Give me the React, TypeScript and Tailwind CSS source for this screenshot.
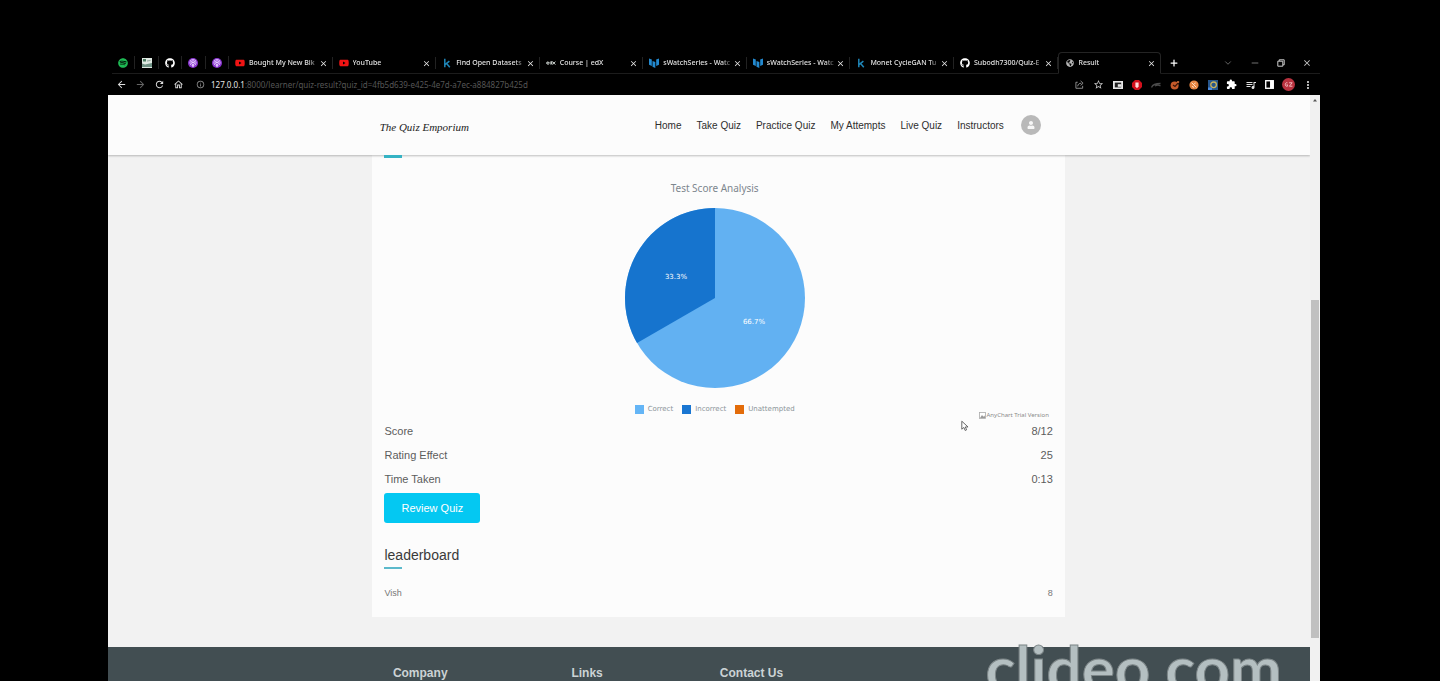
import React from "react";
import { FaGithub, FaPodcast, FaSpotify, FaYoutube, FaUser, FaGlobeAmericas } from "react-icons/fa";
import {
  MdArrowBack,
  MdArrowForward,
  MdClose,
  MdExtension,
  MdInfoOutline,
  MdMoreVert,
  MdOutlineHome,
  MdOutlineStarBorder,
  MdQueueMusic,
  MdRefresh,
} from "react-icons/md";
import { Minus, Plus, ChevronDown } from "lucide-react";

function KaggleIcon() {
  return (
    <svg viewBox="0 0 10 10" className="size-[10px]" fill="none" stroke="#1f86b8" strokeWidth="1.5">
      <path d="M2.8 0.8V9.2M7.4 3.2L3 6.6M4.6 5.4L7.8 9.2" />
    </svg>
  );
}

function WatchIcon() {
  return (
    <svg viewBox="0 0 10 10" className="size-[10px]" fill="#2389cf">
      <path d="M0 0.5L2.8 1.5V8L0 6.8Z" />
      <path d="M3.5 3L6.3 4V10L3.5 8.8Z" />
      <path d="M7.2 1.5L10 0.5V6.8L7.2 8Z" />
    </svg>
  );
}

function EdxIcon() {
  return (
    <svg viewBox="0 0 10 10" className="size-[10px]" fill="none" stroke="#c9cfcb" strokeWidth="1">
      <path d="M0.6 5H3C3 3.6 0.6 3.6 0.6 5S2.4 6.4 3 6M5.8 3V6.4M5.8 5C5.8 3.6 3.8 3.6 3.8 5S5.8 6.4 5.8 5M6.6 3.6L9.4 6.6M9.4 3.6L6.6 6.6" />
    </svg>
  );
}

function PhotoIcon() {
  return (
    <svg viewBox="0 0 10 10" className="size-[10px]">
      <rect width="10" height="10" fill="#dfe9e2" />
      <path d="M0 9V5.5L3 6.5L10 5V9Z" fill="#6f9184" />
      <path d="M1 1H4V3.5H1Z" fill="#4c7c63" />
      <path d="M5 3L8.5 2.5" stroke="#8fa49a" />
    </svg>
  );
}

const pinned = [
  { name: "Spotify", icon: <FaSpotify className="size-[10px] text-[#1eb954]" /> },
  { name: "Photos", icon: <PhotoIcon /> },
  { name: "GitHub", icon: <FaGithub className="size-[10px] text-white" /> },
  { name: "Podcast", icon: <FaPodcast className="size-[10px] rounded-full bg-[#8a35d0] p-px text-[#e9d3ff]" /> },
  { name: "Podcast two", icon: <FaPodcast className="size-[10px] rounded-full bg-[#8a35d0] p-px text-[#e9d3ff]" /> },
];

const youtube = <FaYoutube className="size-[10px] text-[#f01414]" />;

const tabs = [
  { title: "Bought My New Bik", icon: youtube },
  { title: "YouTube", icon: youtube },
  { title: "Find Open Datasets", icon: <KaggleIcon /> },
  { title: "Course | edX", icon: <EdxIcon /> },
  { title: "sWatchSeries - Watc", icon: <WatchIcon /> },
  { title: "sWatchSeries - Watc", icon: <WatchIcon /> },
  { title: "Monet CycleGAN Tu", icon: <KaggleIcon /> },
  { title: "Subodh7300/Quiz-E", icon: <FaGithub className="size-[10px] text-white" /> },
  { title: "Result", icon: <FaGlobeAmericas className="size-2 text-[#b5b5b5]" /> },
];

function TabStrip() {
  return (
    <div className="flex h-[22px] items-stretch pl-1">
      <div className="grid w-[117px] grid-cols-5 border-b border-[#1c1c1c]">
        {pinned.map((p) => (
          <button key={p.name} aria-label={p.name} className="my-1 flex items-center justify-center border-r border-[#222]">
            {p.icon}
          </button>
        ))}
      </div>
      <div className="grid min-w-0 flex-1 grid-cols-9">
        {tabs.map((t, i) => {
          const active = i === tabs.length - 1;
          return (
            <div
              key={i}
              className={
                active
                  ? "flex min-w-0 items-center rounded-t border border-[#242424] border-b-transparent pl-[6px]"
                  : "flex min-w-0 items-center border-y border-[#1c1c1c] border-t-transparent pl-[6px]"
              }
            >
              <span className="flex w-[10px] shrink-0 justify-center">{t.icon}</span>
              <span className="ml-1 min-w-0 flex-1 overflow-hidden mask-r-from-85% mask-r-to-100% text-[7px] leading-3 font-medium whitespace-nowrap text-[#e2e2e2]">
                {t.title}
              </span>
              <button aria-label={"Close " + t.title} className="mr-1 shrink-0 text-[#e6e6e6]">
                <MdClose className="size-[9px]" />
              </button>
              {!active && <span className="h-3 w-px bg-[#222]" />}
            </div>
          );
        })}
      </div>
      <div className="flex w-[159px] items-center border-b border-[#1c1c1c] pr-2 pl-2">
        <button aria-label="New tab" className="text-white">
          <Plus className="size-[10px]" strokeWidth={3} />
        </button>
        <div className="ml-auto flex items-center gap-[17px]">
          <button aria-label="Search tabs" className="text-[#777]"><ChevronDown className="size-[10px]" /></button>
          <button aria-label="Minimize" className="text-[#888]"><Minus className="size-[10px]" /></button>
          <button aria-label="Restore" className="text-[#ccc]">
            <svg viewBox="0 0 8 8" className="size-2" fill="none" stroke="currentColor" strokeWidth="1">
              <path d="M0.8 2.2H5.8V7.2H0.8ZM2.2 2V0.8H7.2V5.8H6" />
            </svg>
          </button>
          <button aria-label="Close window" className="text-[#ccc]"><MdClose className="size-[10px]" /></button>
        </div>
      </div>
    </div>
  );
}

const extensions = [
  {
    name: "Share",
    icon: (
      <svg viewBox="0 0 10 10" className="size-[9px]" fill="none" stroke="#a8a8a8" strokeWidth="0.9">
        <path d="M3 2.5H1V9.2H8.5V6.5M3 7C3.2 4.6 4.8 3.6 7 3.6M6.2 1L9 3.6L6.2 6" />
      </svg>
    ),
  },
  { name: "Bookmark", icon: <MdOutlineStarBorder className="size-[11px] text-[#c8c8c8]" /> },
  {
    name: "Picture in picture",
    icon: (
      <svg viewBox="0 0 10 10" className="size-[10px]">
        <rect y="1" width="10" height="8" fill="#e8e8e8" />
        <rect x="1.8" y="2.6" width="6.4" height="4.8" fill="#222" />
        <rect x="4.8" y="4.2" width="3.6" height="2.6" fill="#e8e8e8" />
      </svg>
    ),
  },
  {
    name: "Ad blocker",
    icon: (
      <svg viewBox="0 0 10 10" className="size-[10px]">
        <path d="M3 0H7L10 3V7L7 10H3L0 7V3Z" fill="#d3101c" />
        <path d="M3.4 2.6H6.6V6.6L5 8.2L3.4 6.6Z" fill="#ffdada" />
      </svg>
    ),
  },
  {
    name: "Speed",
    icon: (
      <svg viewBox="0 0 10 10" className="size-[10px]" fill="none" stroke="#4b4b4b" strokeWidth="1.3">
        <path d="M0.5 7.5C1.5 4.5 4 3.5 9.5 3.5M4 6C6 5 8 5 9.5 6" />
      </svg>
    ),
  },
  {
    name: "Cookie",
    icon: (
      <svg viewBox="0 0 10 10" className="size-[10px]">
        <circle cx="4.6" cy="5.4" r="4" fill="#c65a2a" />
        <path d="M3 5L5 6.5L9.5 1.5" fill="none" stroke="#3a1608" strokeWidth="1.2" />
        <circle cx="8" cy="2" r="1" fill="#d8743e" />
      </svg>
    ),
  },
  {
    name: "Metamask",
    icon: (
      <svg viewBox="0 0 10 10" className="size-[10px]">
        <circle cx="5" cy="5" r="4.6" fill="#e58442" />
        <path d="M2.6 2.6L7.4 7.4M3 6.4L5 7.4M6.6 3L5.2 3.8" stroke="#ffe0c4" strokeWidth="1" />
      </svg>
    ),
  },
  {
    name: "Color picker",
    icon: (
      <svg viewBox="0 0 10 10" className="size-[10px]">
        <rect width="10" height="10" fill="#27568c" />
        <circle cx="5.6" cy="4.8" r="2.8" fill="none" stroke="#c9b25a" strokeWidth="1.3" />
        <rect y="7.5" width="4" height="2.5" fill="#4c8be0" />
      </svg>
    ),
  },
  { name: "Extensions", icon: <MdExtension className="size-[11px] text-white" /> },
  { name: "Media", icon: <MdQueueMusic className="size-[12px] text-[#e2e2e2]" /> },
  {
    name: "Side panel",
    icon: (
      <svg viewBox="0 0 10 10" className="size-[9px]">
        <rect x="0.8" y="0.8" width="8.4" height="8.4" fill="none" stroke="#fff" strokeWidth="1.5" />
        <rect x="5.6" y="1" width="3.6" height="8" fill="#fff" />
      </svg>
    ),
  },
  {
    name: "Profile",
    icon: (
      <svg viewBox="0 0 12 12" className="size-[13px]">
        <circle cx="6" cy="6" r="6" fill="#b8323f" />
        <path d="M5 4.4C2.4 3.6 2.4 8.4 5 7.6V6.2H4.2M6.6 4.4H9.4L6.8 7.6H9.6" fill="none" stroke="#f3b9bd" strokeWidth="0.9" />
      </svg>
    ),
  },
  { name: "Menu", icon: <MdMoreVert className="size-[12px] text-[#ddd]" /> },
];

function Toolbar() {
  return (
    <div className="flex h-[21px] items-center pr-[3px] pl-2">
      <div className="flex items-center gap-2 text-[#dedede]">
        <button aria-label="Back"><MdArrowBack className="size-[11px]" /></button>
        <button aria-label="Forward" className="text-[#666]"><MdArrowForward className="size-[11px]" /></button>
        <button aria-label="Reload"><MdRefresh className="size-[11px]" /></button>
        <button aria-label="Home"><MdOutlineHome className="size-[11px]" /></button>
      </div>
      <MdInfoOutline className="ml-3 size-[9px] text-[#999]" />
      <label htmlFor="address" className="ml-[6px] text-[8px] leading-3 text-[#e6e6e6]">127.0.0.1</label>
      <input
        id="address"
        defaultValue=":8000/learner/quiz-result?quiz_id=4fb5d639-e425-4e7d-a7ec-a884827b425d"
        className="min-w-0 flex-1 bg-transparent text-[8px] leading-3 text-[#565656] outline-none"
      />
      <div className="flex items-center">
        {extensions.map((e) => (
          <button key={e.name} aria-label={e.name} className="flex w-[19px] items-center justify-center">
            {e.icon}
          </button>
        ))}
      </div>
    </div>
  );
}

const links = ["Home", "Take Quiz", "Practice Quiz", "My Attempts", "Live Quiz", "Instructors"];

function SiteHeader() {
  return (
    <header className="relative flex h-[60px] shrink-0 items-center justify-between bg-[#fcfcfc] pr-[22.4%] pl-[22.6%] shadow-[0_1px_2px_rgba(0,0,0,0.25)]">
      <a href="#home" className="pt-1 font-['Liberation_Serif',serif] text-[11px] leading-4 text-[#222] italic">
        The Quiz Emporium
      </a>
      <nav className="flex items-center text-[10px] leading-4 text-[#2e2e2e]">
        <div className="flex gap-[15px] pt-px">
          {links.map((l) => (
            <a key={l} href="#page" className="whitespace-nowrap">{l}</a>
          ))}
        </div>
        <button aria-label="Account" className="ml-[17px] flex size-5 items-center justify-center rounded-full bg-[#b9b9b9] text-[#f7f7f7]">
          <FaUser className="size-2" />
        </button>
      </nav>
    </header>
  );
}

const legend = [
  { name: "Correct", swatch: "size-[9px] bg-[#64b5f6]" },
  { name: "Incorrect", swatch: "size-[9px] bg-[#1976d2]" },
  { name: "Unattempted", swatch: "size-[9px] bg-[#e36c0a]" },
];

function ScoreChart() {
  return (
    <section className="relative flex flex-col items-center pt-[22px] pr-2 pb-1 font-['Noto_Sans',sans-serif]">
      <h2 className="text-[10px] leading-4 text-[#7c868e]">Test Score Analysis</h2>
      <svg viewBox="0 0 180 180" className="mt-3 size-[180px]" role="img" aria-label="Score split">
        <circle cx="90" cy="90" r="90" fill="#62b1f2" />
        <path d="M90 90V0A90 90 0 0 0 12.06 135Z" fill="#1674ce" />
        <text x="51" y="71" textAnchor="middle" className="fill-white font-['DejaVu_Sans',sans-serif] text-[7px]">33.3%</text>
        <text x="129" y="116" textAnchor="middle" className="fill-white font-['DejaVu_Sans',sans-serif] text-[7px]">66.7%</text>
      </svg>
      <ul className="mt-[15px] flex gap-[9px] font-['DejaVu_Sans',sans-serif] text-[7px] leading-3 text-[#8b949a]">
        {legend.map((l) => (
          <li key={l.name} className="flex items-center gap-1">
            <span className={l.swatch} />
            {l.name}
          </li>
        ))}
      </ul>
      <p className="absolute right-1 bottom-0 flex items-center gap-px text-[6px] leading-2 text-[#8a8a8a]">
        <svg viewBox="0 0 7 7" className="size-[7px]">
          <rect x="0.5" y="0.5" width="6" height="6" fill="#fff" stroke="#aaa" strokeWidth="0.8" />
          <path d="M1 6L3 3L4.4 4.8L5.4 3.6L6.4 6Z" fill="#999" />
        </svg>
        AnyChart Trial Version
      </p>
    </section>
  );
}

const results = [
  ["Score", "8/12"],
  ["Rating Effect", "25"],
  ["Time Taken", "0:13"],
];

export default function App() {
  return (
    <div className="relative flex h-screen flex-col overflow-hidden bg-black pt-[52px] pr-[8.33%] pl-[7.5%] font-['Liberation_Sans',Arial,sans-serif]">
      <div className="shrink-0 font-['Noto_Sans',sans-serif]">
        <TabStrip />
        <Toolbar />
      </div>
      <div className="flex min-h-0 flex-1">
        <div className="flex min-w-0 flex-1 flex-col overflow-hidden bg-[#f2f2f2]">
          <SiteHeader />
          <main className="shrink-0 pr-[20.4%] pb-[30px] pl-[22%]">
            <div className="bg-[#fcfcfc] px-3 pb-4">
              <div className="relative h-[3px] w-[18px] bg-[#35b3c4]" />
              <ScoreChart />
              <dl className="text-[11px] leading-6 text-[#5c5c5c]">
                {results.map(([k, v]) => (
                  <div key={k} className="flex justify-between">
                    <dt>{k}</dt>
                    <dd>{v}</dd>
                  </div>
                ))}
              </dl>
              <button className="mt-[2px] h-[30px] rounded-[3px] bg-[#04c8f2] px-[17px] text-[11px] leading-4 text-white">
                Review Quiz
              </button>
              <h3 className="mt-5 text-[14px] leading-6 text-[#3a3a3a]">leaderboard</h3>
              <div className="h-[2px] w-[18px] bg-[#5cb9cb]" />
              <div className="mt-4 flex justify-between text-[9px] leading-4 text-[#777]">
                <span>Vish</span>
                <span>8</span>
              </div>
            </div>
          </main>
          <footer className="grid min-h-[120px] shrink-0 grid-cols-[178fr_148fr_320fr] bg-[#424e52] pt-[18px] pr-[22.4%] pl-[23.7%] text-[12px] leading-4 font-bold text-[#ccd3d5]">
            <h4>Company</h4>
            <h4>Links</h4>
            <h4>Contact Us</h4>
          </footer>
        </div>
        <div className="flex w-[10px] shrink-0 flex-col items-center bg-[#f1f1f1]">
          <svg viewBox="0 0 10 10" className="size-[10px]">
            <path d="M3 6.5L5 4L7 6.5Z" fill="#555" />
          </svg>
          <div className="mt-[195px] h-[338px] w-2 bg-[#c0c0c0]" />
        </div>
      </div>
      <svg viewBox="0 0 10 14" className="absolute top-[420px] left-[961px] h-3 w-[8px]" fill="#fff" stroke="#555" strokeWidth="1.1">
        <path d="M1 1V11L3.6 8.8L5.2 12.6L7 11.8L5.4 8.2H8.8Z" />
      </svg>
      <p className="absolute right-[158px] -bottom-[24px] font-['Lato',sans-serif] text-[62px] leading-[76px] font-bold text-[#b4bfc1] [-webkit-text-stroke:1px_#7d8688]">
        clideo.com
      </p>
    </div>
  );
}
